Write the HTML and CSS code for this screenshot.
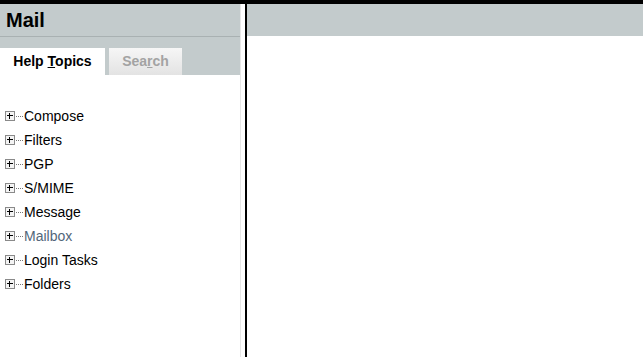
FILE: index.html
```html
<!DOCTYPE html>
<html lang="en">
<head>
  <meta charset="UTF-8" />
  <title>Mail help</title>
  <link rel="stylesheet" href="styles.css">
</head>
<body>
  <div id="topbar"></div>
  <div id="frames">
    <div id="sidebar">
      <div class="sidebar-head">
        <h1>Mail</h1>
      </div>
      <div class="tabs">
        <span class="tab active">Help <u>T</u>opics</span>
        <span class="tab">Sea<u>r</u>ch</span>
      </div>
      <ul class="tree">
        <li><span class="plus"></span><span class="dots"></span>Compose</li>
        <li><span class="plus"></span><span class="dots"></span>Filters</li>
        <li><span class="plus"></span><span class="dots"></span>PGP</li>
        <li><span class="plus"></span><span class="dots"></span>S/MIME</li>
        <li><span class="plus"></span><span class="dots"></span>Message</li>
        <li class="dim"><span class="plus"></span><span class="dots"></span>Mailbox</li>
        <li><span class="plus"></span><span class="dots"></span>Login Tasks</li>
        <li><span class="plus"></span><span class="dots"></span>Folders</li>
      </ul>
    </div>
    <div id="splitter"></div>
    <div id="main">
      <div class="main-head"></div>
    </div>
  </div>
</body>
</html>
```

FILE: styles.css
```css
html, body {
  height: 100%;
}
body {
  margin: 0;
  font-family: Arial, "Liberation Sans", sans-serif;
  background: white;
  display: flex;
  flex-direction: column;
  overflow: hidden;
}

#topbar {
  height: 4px;
  background: #000;
}

#frames {
  flex: 1;
  display: flex;
}

#sidebar {
  width: 240px;
}

.sidebar-head {
  height: 32px;
  background: #c3cbcc;
  border-bottom: 1px solid #a9b1b2;
}
.sidebar-head h1 {
  margin: 0;
  padding: 4px 0 0 6px;
  font-size: 20px;
  line-height: 24px;
  font-weight: bold;
  color: #000;
}

.tabs {
  height: 27px;
  padding-top: 11px;
  background: #c3cbcc;
  display: flex;
  gap: 4px;
}
.tab {
  font-size: 14px;
  font-weight: bold;
  line-height: 27px;
  text-align: center;
}
.tab.active {
  width: 105px;
  background: #fff;
  color: #000;
}
.tab:not(.active) {
  width: 73px;
  color: #a3a3a3;
  background: linear-gradient(#f6f6f6, #e3e3e3);
}

/* topic tree */
.tree {
  list-style: none;
  margin: 0;
  padding: 29px 0 0 5px;
}
.tree li {
  height: 24px;
  display: flex;
  align-items: center;
  font-size: 14px;
  color: #000;
}
.tree li.dim {
  color: #52667a;
}
.plus {
  position: relative;
  box-sizing: border-box;
  width: 10px;
  height: 10px;
  border: 1px solid #8a8a8a;
  background: #f4f4f4;
}
.plus::before, .plus::after {
  content: "";
  position: absolute;
  background: #000;
}
.plus::before {
  left: 1px; right: 1px; top: 3px; height: 1px;
}
.plus::after {
  top: 1px; bottom: 1px; left: 3px; width: 1px;
}
.dots {
  width: 7px;
  margin: 0 1px 0 1px;
  border-top: 1px dotted #777;
}

#splitter {
  box-sizing: border-box;
  width: 7px;
  background: #fff;
  border-left: 1px solid #e6e6e6;
  border-right: 2px solid #000;
}

#main {
  flex: 1;
}
.main-head {
  height: 32px;
  background: #c3cbcc;
}
```
